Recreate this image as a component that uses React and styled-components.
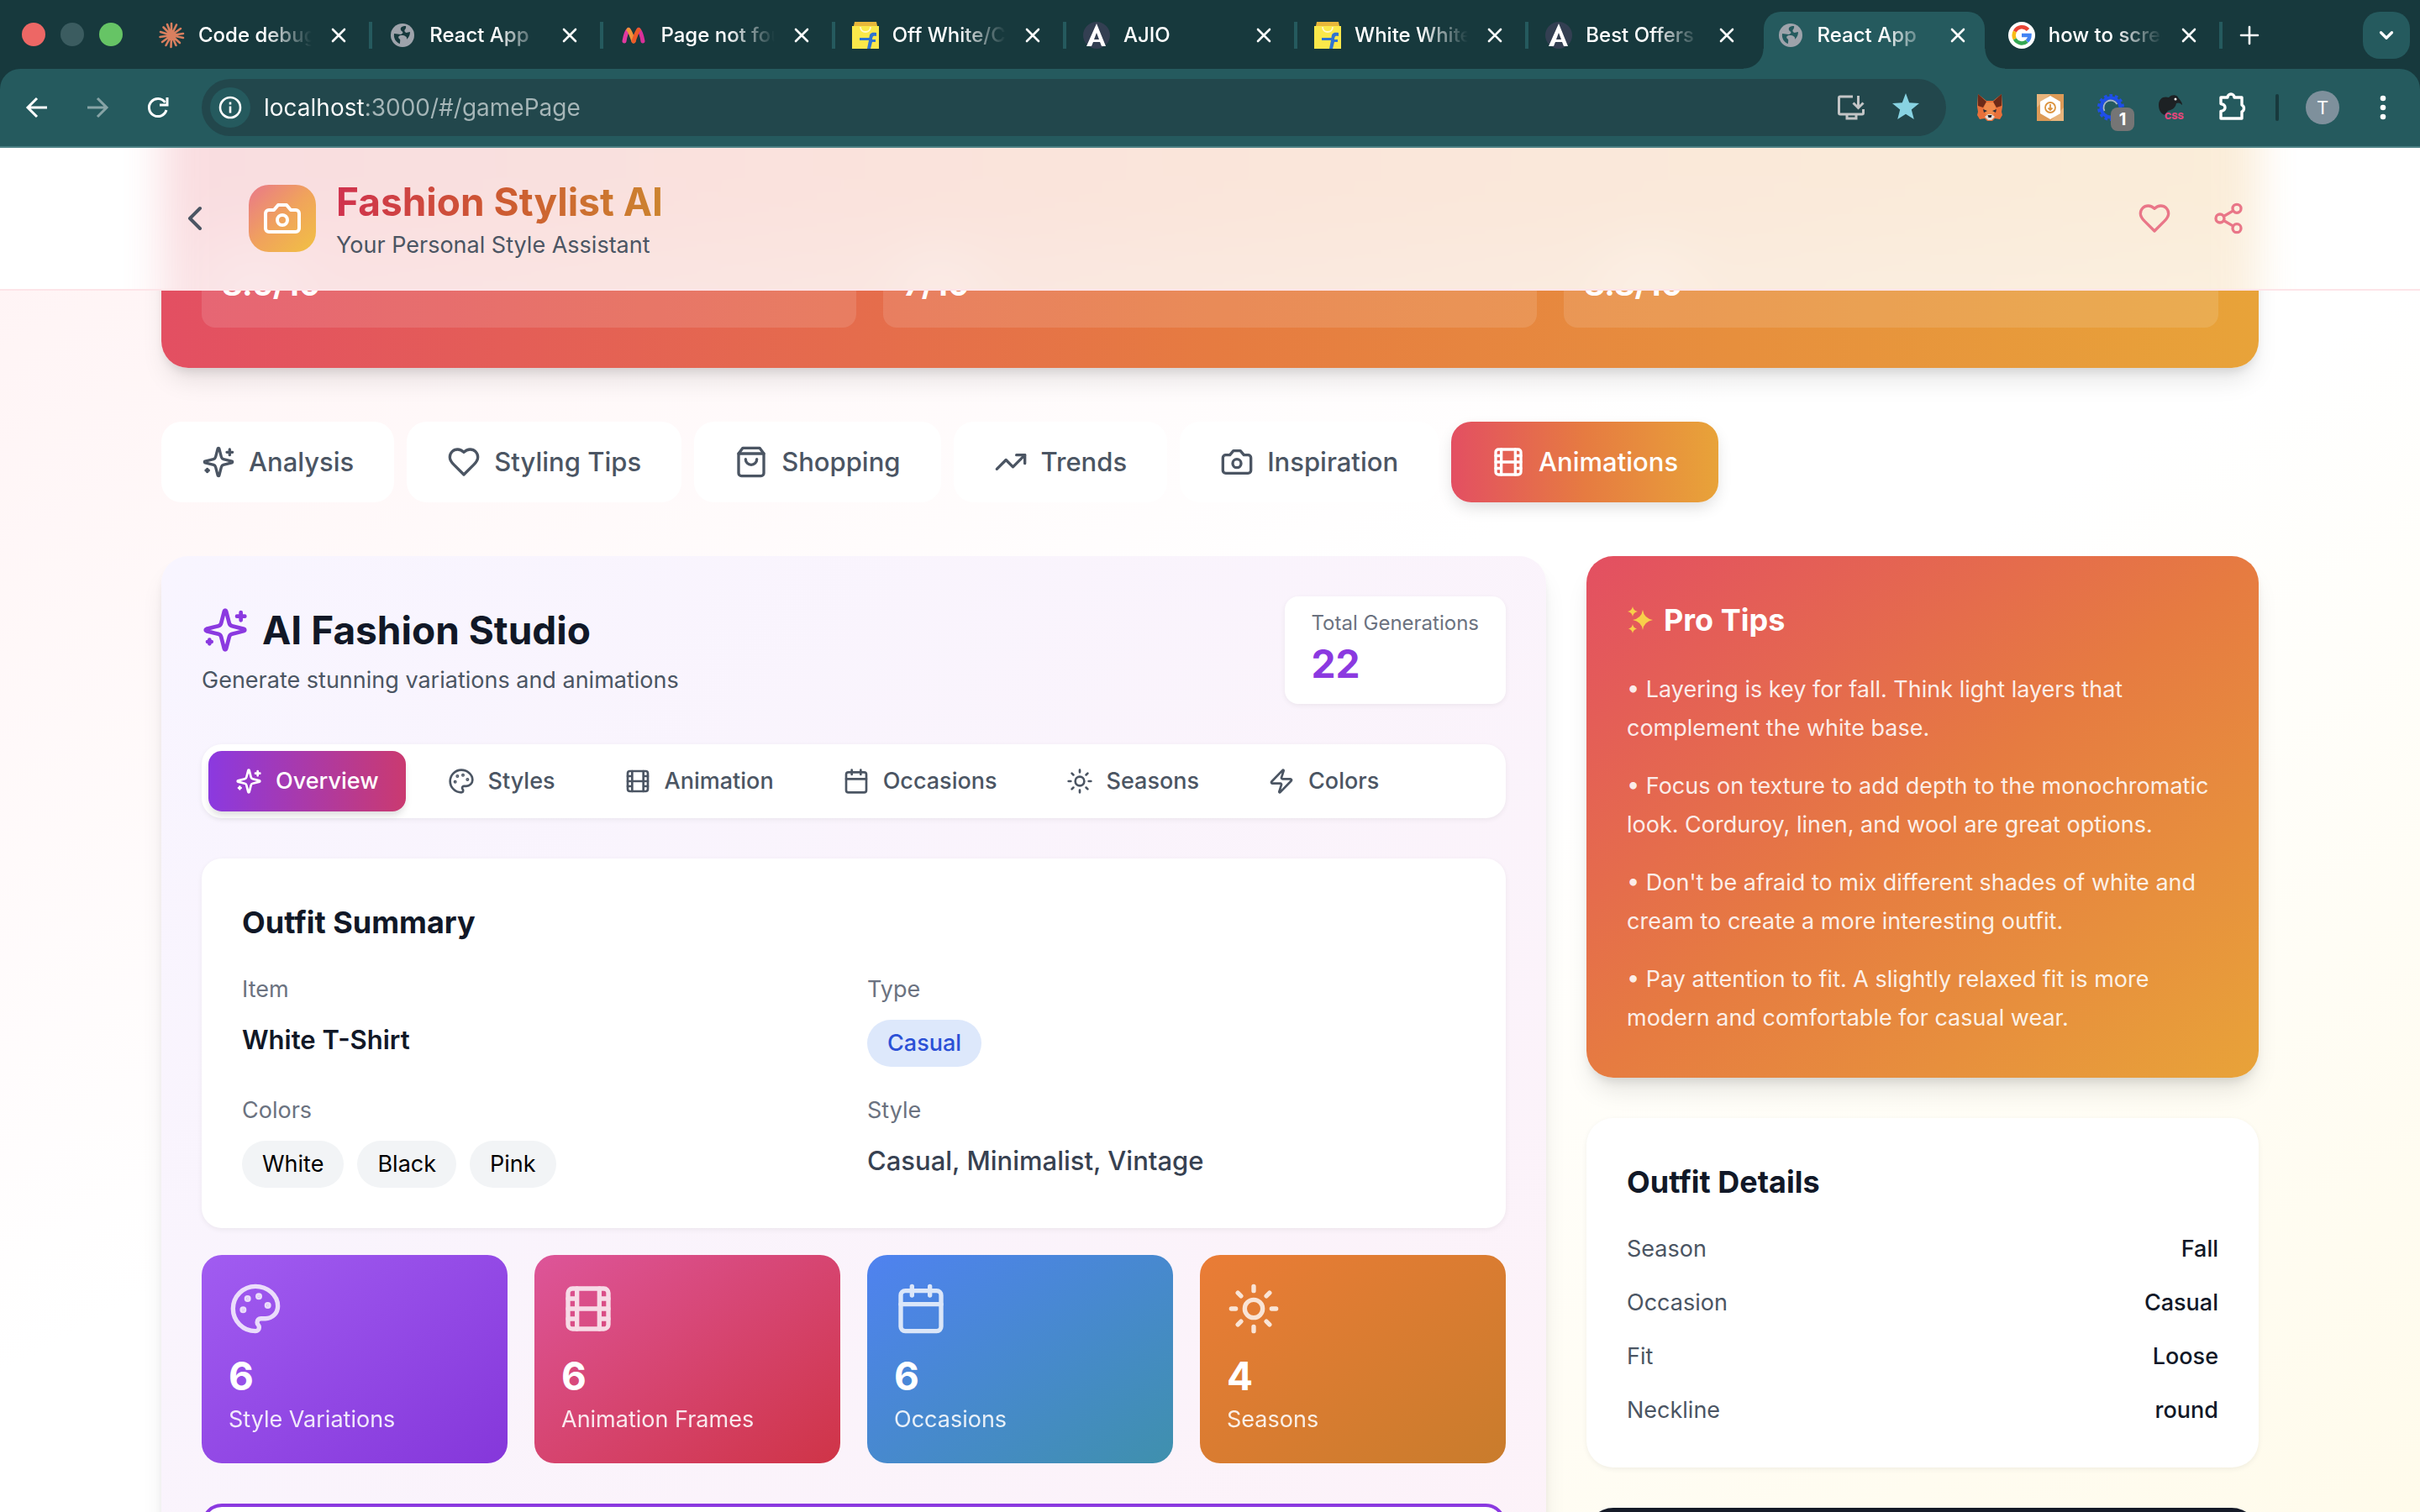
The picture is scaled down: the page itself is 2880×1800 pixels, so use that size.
import React from 'react';
import styled, { createGlobalStyle, css } from 'styled-components';

const FONT = 'Inter, Roboto, "Liberation Sans", sans-serif';

const GlobalStyle = createGlobalStyle`
  *, *::before, *::after { box-sizing: border-box; }
  body { margin: 0; font-family: ${FONT}; color: #000; }
  h1, h2, h3, p, ul, dl, dd { margin: 0; padding: 0; }
  ul { list-style: none; }
  button, input { font: inherit; color: inherit; border: 0; background: none; padding: 0; margin: 0; }
  svg { display: block; flex: none; }
`;

/* ---------- icons ---------- */

const ICONS = {
  sparkles: (
    <>
      <path d="M9.937 15.5A2 2 0 0 0 8.5 14.063l-6.135-1.582a.5.5 0 0 1 0-.962L8.5 9.936A2 2 0 0 0 9.937 8.5l1.582-6.135a.5.5 0 0 1 .963 0L14.063 8.5A2 2 0 0 0 15.5 9.937l6.135 1.581a.5.5 0 0 1 0 .964L15.5 14.063a2 2 0 0 0-1.437 1.437l-1.582 6.135a.5.5 0 0 1-.963 0z" />
      <path d="M20 3v4M22 5h-4M4 17v2M5 18H3" />
    </>
  ),
  heart: <path d="M19 14c1.49-1.46 3-3.21 3-5.5A5.5 5.5 0 0 0 16.5 3c-1.76 0-3 .5-4.5 2-1.5-1.5-2.74-2-4.5-2A5.5 5.5 0 0 0 2 8.5c0 2.3 1.5 4.05 3 5.5l7 7Z" />,
  bag: (
    <>
      <path d="M6 2 3 6v14a2 2 0 0 0 2 2h14a2 2 0 0 0 2-2V6l-3-4Z" />
      <path d="M3 6h18M16 10a4 4 0 0 1-8 0" />
    </>
  ),
  trend: (
    <>
      <path d="M22 7l-8.500 8.500-5-5L2 17" />
      <path d="M16 7h6v6" />
    </>
  ),
  camera: (
    <>
      <path d="M14.5 4h-5L7 7H4a2 2 0 0 0-2 2v9a2 2 0 0 0 2 2h16a2 2 0 0 0 2-2V9a2 2 0 0 0-2-2h-3l-2.5-3z" />
      <circle cx="12" cy="13" r="3" />
    </>
  ),
  film: (
    <>
      <rect width="18" height="18" x="3" y="3" rx="2" />
      <path d="M7 3v18M3 7.5h4M3 12h18M3 16.5h4M17 3v18M17 7.5h4M17 16.5h4" />
    </>
  ),
  palette: (
    <>
      <circle cx="13.5" cy="6.5" r=".5" fill="currentColor" />
      <circle cx="17.5" cy="10.5" r=".5" fill="currentColor" />
      <circle cx="8.5" cy="7.5" r=".5" fill="currentColor" />
      <circle cx="6.5" cy="12.5" r=".5" fill="currentColor" />
      <path d="M12 2C6.5 2 2 6.5 2 12s4.5 10 10 10c.926 0 1.648-.746 1.648-1.688 0-.437-.18-.835-.437-1.125-.29-.289-.438-.652-.438-1.125a1.640 1.640 0 0 1 1.668-1.668h1.996c3.051 0 5.555-2.503 5.555-5.554C21.965 6.012 17.461 2 12 2z" />
    </>
  ),
  calendar: (
    <>
      <path d="M8 2v4M16 2v4M3 10h18" />
      <rect width="18" height="18" x="3" y="4" rx="2" />
    </>
  ),
  sun: (
    <>
      <circle cx="12" cy="12" r="4" />
      <path d="M12 2v2M12 20v2M4.930 4.930l1.410 1.410M17.660 17.660l1.410 1.410M2 12h2M20 12h2M6.340 17.660l-1.410 1.410M19.070 4.930l-1.410 1.410" />
    </>
  ),
  zap: <path d="M4 14a1 1 0 0 1-.78-1.63l9.9-10.2a.5.5 0 0 1 .86.46l-1.92 6.02A1 1 0 0 0 13 10h7a1 1 0 0 1 .78 1.63l-9.9 10.2a.5.5 0 0 1-.86-.46l1.92-6.02A1 1 0 0 0 11 14z" />,
  chevronLeft: <path d="m15 18-6-6 6-6" />,
  chevronDown: <path d="m6 9 6 6 6-6" />,
  share: (
    <>
      <circle cx="18" cy="5" r="3" />
      <circle cx="6" cy="12" r="3" />
      <circle cx="18" cy="19" r="3" />
      <path d="m8.590 13.510 6.830 3.980M15.410 6.510l-6.820 3.980" />
    </>
  ),
  close: <path d="M5 5l14 14M19 5L5 19" />,
  plus: <path d="M12 2v20M2 12h20" />,
};

function Icon({ name, size = 24, stroke = 2 }) {
  return (
    <svg width={size} height={size} viewBox="0 0 24 24" fill="none" stroke="currentColor" strokeWidth={stroke} strokeLinecap="round" strokeLinejoin="round" aria-hidden="true">
      {ICONS[name]}
    </svg>
  );
}

const FAVICONS = {
  burst: (
    <g stroke="#d97f5f" strokeWidth="2.6" strokeLinecap="round">
      <path d="M16 16L16 2M16 16L22 3.500M16 16L27 8M16 16L30 14M16 16L30 19M16 16L26 25M16 16L21.500 28M16 16L15.500 30M16 16L9.500 28M16 16L5 24M16 16L2.500 18M16 16L3 12M16 16L6.500 6.500M16 16L11 3" />
    </g>
  ),
  globe: (
    <>
      <circle cx="16" cy="16" r="14" fill="#9ea3ab" />
      <path d="M18 5c-5 1-5 4-3 6 2 1 2 3-1 4-3 0-5-1-8-1-1 6 3 11 7 12 0-3 1-5-1-6-2-2 0-4 3-4 4 0 7 2 6 5 3-3 4-6 4-9-3 0-4 2-6 0-2-3 2-3 1-7z" fill="var(--tab-bg)" />
    </>
  ),
  myntra: (
    <g fill="none" strokeWidth="5" strokeLinecap="round">
      <path d="M5 23C6 17 8 11 10 9.500" stroke="#e23aa0" />
      <path d="M27 23C26 17 24 11 22 9.500" stroke="#d9309a" />
      <path d="M10 9.500C12 11 14 18 16 23" stroke="#f0933a" />
      <path d="M22 9.500C20 11 18 18 16 23" stroke="#ec5a28" />
    </g>
  ),
  flipkart: (
    <>
      <path d="M3 0h26l1 5H2z" fill="#e9b73a" />
      <path d="M0 5h32v27H0z" fill="#fbe84a" />
      <path d="M10 6c0 8 12 8 12 0" fill="none" stroke="#fff8c8" strokeWidth="1.800" />
      <path d="M29 13c-7-1-8 1-8.500 6H9v3h11l-2 10h4l2-8h4v-3h-4c.4-4 1-5 5-4z" fill="#2f73d0" />
    </>
  ),
  ajio: (
    <>
      <circle cx="16" cy="16" r="16" fill="#333f52" />
      <path d="M16 2l11 27h-5l-2-5h-8l-2 5H4zM16 13l-3 8h6z" fill="#fff" fillRule="evenodd" />
    </>
  ),
  google: (
    <>
      <circle cx="16" cy="16" r="16" fill="#fff" />
      <g fill="none" strokeWidth="4.400">
        <path d="M23.500 9.500A9.500 9.500 0 0 0 7.800 11.500" stroke="#e94435" />
        <path d="M7.800 11.500a9.500 9.500 0 0 0 0 9" stroke="#f8bb15" />
        <path d="M7.800 20.500a9.500 9.500 0 0 0 14.400 2.700" stroke="#34a753" />
        <path d="M22.200 23.200A9.500 9.500 0 0 0 25.500 16H16" stroke="#4384f3" />
      </g>
    </>
  ),
};

function Favicon({ name }) {
  return (
    <svg width="32" height="32" viewBox="0 0 32 32" aria-hidden="true">
      {FAVICONS[name]}
    </svg>
  );
}

/* ---------- browser frame ---------- */

const Window = styled.div`
  display: flex;
  flex-direction: column;
  height: 100vh;
  overflow: hidden;
`;

const TabStrip = styled.header`
  display: flex;
  flex: none;
  height: 82px;
  background: #17393d;
  color: #fff;
`;

const Lights = styled.div`
  display: flex;
  flex: none;
  align-items: center;
  gap: 18px;
  width: 164px;
  padding-left: 26px;
`;

const Light = styled.span`
  width: 28px;
  height: 28px;
  border-radius: 50%;
  background: ${(p) => p.$color};
`;

const Tabs = styled.div`
  display: flex;
  flex: 1;
  min-width: 0;
`;

const Tab = styled.div`
  --tab-bg: ${(p) => (p.$active ? '#255a5e' : '#17393d')};
  position: relative;
  display: flex;
  flex: 1;
  align-items: center;
  gap: 16px;
  min-width: 0;
  padding: 2px 20px 0 24px;
  z-index: ${(p) => (p.$active ? 1 : 0)};

  ${(p) =>
    p.$divider &&
    css`
      background: linear-gradient(#255a5e, #255a5e) 0 26px / 4px 32px no-repeat;
    `}
`;

const ActiveShape = styled.span`
  position: absolute;
  inset: 14px 4px 0 8px;
  z-index: -1;
  border-radius: 20px 20px 0 0;
  background: #255a5e;

  &::before, &::after {
    content: '';
    position: absolute;
    bottom: 0;
    width: 24px;
    height: 24px;
  }
  &::before {
    right: 100%;
    background: radial-gradient(circle at 0 0, transparent 23px, #255a5e 24px);
  }
  &::after {
    left: 100%;
    background: radial-gradient(circle at 100% 0, transparent 23px, #255a5e 24px);
  }
`;

const TabTitle = styled.button`
  flex: 1;
  min-width: 0;
  overflow: hidden;
  white-space: nowrap;
  text-align: left;
  font-size: 24px;
  font-weight: 500;
  line-height: 32px;
  mask-image: linear-gradient(90deg, #000 calc(100% - 56px), transparent);
`;

const TabClose = styled.button`
  display: grid;
  place-items: center;
  width: 32px;
  height: 32px;
`;

const StripEnd = styled.div`
  display: flex;
  flex: none;
  align-items: center;
  justify-content: space-between;
  width: 239px;
  padding: 2px 12px 0 20px;
  background: linear-gradient(#255a5e, #255a5e) 0 26px / 4px 32px no-repeat;
`;

const TabSearch = styled.button`
  display: grid;
  place-items: center;
  width: 56px;
  height: 56px;
  border-radius: 20px;
  background: #255a5e;
`;

const ToolbarBack = styled.div`
  flex: none;
  background: #17393d;
`;

const Toolbar = styled.nav`
  display: flex;
  align-items: center;
  gap: 32px;
  height: 94px;
  padding: 0 24px;
  border-bottom: 2px solid #4b7f83;
  border-radius: 24px 24px 0 0;
  background: #255a5e;
  color: #fff;
`;

const ToolButton = styled.button`
  position: relative;
  display: grid;
  place-items: center;
  flex: none;
  width: 40px;
  height: 40px;
  opacity: ${(p) => (p.$dim ? 0.45 : 1)};
`;

const AddressBar = styled.div`
  display: flex;
  flex: 1;
  align-items: center;
  gap: 16px;
  height: 68px;
  padding: 0 32px 0 10px;
  border-radius: 34px;
  background: #22474c;
`;

const SiteInfo = styled.button`
  display: grid;
  place-items: center;
  width: 48px;
  height: 48px;
  border-radius: 50%;
  background: #255a5e;
`;

const AddressInput = styled.input`
  flex: 1;
  min-width: 0;
  height: 40px;
  font-size: 28px;
  color: transparent;
  background: linear-gradient(90deg, #fff 121px, #a6b6b8 121px);
  background-clip: text;
  -webkit-background-clip: text;
`;

const AddressIcons = styled.div`
  display: flex;
  gap: 32px;
`;

const CountBadge = styled.span`
  position: absolute;
  left: 20px;
  top: 20px;
  width: 28px;
  height: 28px;
  border-radius: 8px;
  background: #757575;
  font-size: 20px;
  font-weight: 700;
  line-height: 28px;
  text-align: center;
`;

const ToolDivider = styled.span`
  width: 4px;
  height: 32px;
  border-radius: 2px;
  background: #17393d;
`;

const Avatar = styled.button`
  width: 40px;
  height: 40px;
  border-radius: 50%;
  background: #7e909c;
  font-size: 22px;
  line-height: 40px;
`;

/* ---------- page ---------- */

const SUNSET = '#e34f62, #e67b41, #e8a339';

const Viewport = styled.main`
  display: flex;
  flex: 1;
  flex-direction: column;
  min-height: 0;
  background: linear-gradient(to bottom right, #fff3f4, #fff 45%, #fff 55%, #fffbeb);
`;

const AppHeader = styled.header`
  position: relative;
  flex: none;
  overflow: hidden;
  border-bottom: 2px solid #fde4e8;
  background: #fff;
`;

const HeaderTint = styled.div`
  position: absolute;
  inset: -60px 0;
  opacity: 0.19;
  filter: blur(24px);
`;

const Container = styled.div`
  max-width: 2560px;
  margin: 0 auto;
  padding: 0 32px;
`;

const TintFill = styled.div`
  height: 288px;
  background:
    radial-gradient(circle at 112px 225px, rgba(255, 255, 255, 0.22), transparent 90px),
    radial-gradient(circle at 37% 225px, rgba(255, 255, 255, 0.22), transparent 80px),
    radial-gradient(circle at calc(67% + 96px) 225px, rgba(255, 255, 255, 0.22), transparent 90px),
    linear-gradient(transparent 40%, rgba(255, 255, 255, 0.15) 80%),
    linear-gradient(to right, ${SUNSET});
`;

const HeaderRow = styled(Container)`
  position: relative;
  display: flex;
  align-items: center;
  padding-top: 32px;
  padding-bottom: 32px;
`;

const IconButton = styled.button`
  display: grid;
  place-items: center;
  padding: 16px;
  color: ${(p) => p.$color};
`;

const Logo = styled.div`
  display: grid;
  place-items: center;
  width: 80px;
  height: 80px;
  margin: 0 24px;
  border-radius: 24px;
  background: linear-gradient(to bottom right, #e9788a, #f0a35c, #f1c143);
  color: #fff;
`;

const HeaderText = styled.div`
  display: flex;
  flex-direction: column;
  align-items: flex-start;
`;

const AppTitle = styled.h1`
  font-size: 46px;
  font-weight: 700;
  line-height: 64px;
  color: transparent;
  background: linear-gradient(90deg, #d0324e, #cd5a31, #cc842f);
  background-clip: text;
  -webkit-background-clip: text;
`;

const Muted = styled.p`
  font-size: 27px;
  line-height: 40px;
  color: #4b5563;
`;

const HeaderActions = styled.div`
  display: flex;
  gap: 16px;
  margin-left: auto;
`;

const Scroller = styled.div`
  flex: 1;
  min-height: 0;
  overflow: hidden;
`;

const Scrolled = styled(Container)`
  margin-top: -170px;
`;

const Banner = styled.section`
  display: grid;
  grid-template-columns: repeat(3, 1fr);
  gap: 32px;
  padding: 70px 48px 48px;
  border-radius: 32px;
  background: linear-gradient(to right, ${SUNSET});
  box-shadow: 0 20px 30px -6px rgba(0, 0, 0, 0.1), 0 8px 12px -4px rgba(0, 0, 0, 0.1);
`;

const Score = styled.div`
  padding: 64px 24px 24px;
  border-radius: 16px;
  background: rgba(255, 255, 255, 0.12);
  color: #fff;
  font-size: 38px;
  font-weight: 700;
  line-height: 56px;
`;

const PageNav = styled.nav`
  display: flex;
  gap: 15px;
  margin-top: 64px;
`;

const PageNavButton = styled.button`
  display: flex;
  align-items: center;
  gap: 16px;
  padding: 24px 48px;
  border-radius: 24px;
  font-size: 31px;
  font-weight: 500;
  line-height: 48px;
  white-space: nowrap;
  background: ${(p) => (p.$active ? `linear-gradient(to right, ${SUNSET})` : '#fff')};
  color: ${(p) => (p.$active ? '#fff' : '#4b5563')};
  box-shadow: ${(p) => (p.$active ? '0 8px 20px -4px rgba(0, 0, 0, 0.16)' : 'none')};
`;

const Columns = styled.div`
  display: grid;
  grid-template-columns: repeat(3, 1fr);
  align-items: start;
  gap: 48px;
  margin-top: 64px;
`;

const Studio = styled.section`
  display: flex;
  flex-direction: column;
  grid-column: span 2;
  gap: 48px;
  padding: 48px;
  border-radius: 32px;
  background: linear-gradient(to bottom right, #f8f5ff, #fdf2f8);
  box-shadow: 0 20px 30px -6px rgba(0, 0, 0, 0.1), 0 8px 12px -4px rgba(0, 0, 0, 0.1);
`;

const StudioHead = styled.div`
  display: flex;
  align-items: center;
  justify-content: space-between;
`;

const StudioTitle = styled.h2`
  display: flex;
  align-items: center;
  gap: 16px;
  margin-bottom: 8px;
  color: #111827;
  font-size: 46px;
  font-weight: 700;
  line-height: 64px;

  svg { color: #8b39e0; }
`;

const softShadow = css`
  box-shadow: 0 2px 6px rgba(0, 0, 0, 0.06);
`;

const Total = styled.div`
  padding: 16px 32px;
  border-radius: 16px;
  background: #fff;
  ${softShadow}
`;

const TotalLabel = styled.p`
  color: #6b7280;
  font-size: 24px;
  line-height: 32px;
`;

const TotalValue = styled.p`
  color: #8b39e0;
  font-size: 46px;
  font-weight: 700;
  line-height: 64px;
`;

const StudioTabs = styled.div`
  display: flex;
  gap: 18px;
  padding: 8px;
  border-radius: 24px;
  background: #fff;
  ${softShadow}
`;

const StudioTab = styled.button`
  display: flex;
  align-items: center;
  gap: 16px;
  padding: 16px 32px;
  border-radius: 16px;
  font-size: 27px;
  font-weight: 500;
  line-height: 40px;
  color: ${(p) => (p.$active ? '#fff' : '#4b5563')};
  background: ${(p) => (p.$active ? 'linear-gradient(to right, #8b39e0, #ca3a70)' : 'none')};
  box-shadow: ${(p) => (p.$active ? '0 6px 10px -2px rgba(0, 0, 0, 0.15)' : 'none')};
`;

const Card = styled.section`
  padding: 48px;
  border-radius: ${(p) => p.$radius}px;
  background: #fff;
  ${softShadow}
`;

const CardTitle = styled.h3`
  display: flex;
  align-items: center;
  gap: 12px;
  margin-bottom: 32px;
  color: ${(p) => p.$color || '#111827'};
  font-size: 36px;
  font-weight: 700;
  line-height: 56px;
`;

const SummaryGrid = styled.dl`
  display: grid;
  grid-template-columns: repeat(2, 1fr);
  gap: 32px;
`;

const Term = styled.dt`
  margin-bottom: 16px;
  color: #6b7280;
  font-size: 27px;
  line-height: 40px;
`;

const Value = styled.dd`
  display: flex;
  gap: 16px;
  color: ${(p) => p.$color};
  font-size: 31px;
  font-weight: ${(p) => p.$weight};
  line-height: 48px;
`;

const Pill = styled.span`
  padding: 8px 24px;
  border-radius: 28px;
  background: ${(p) => (p.$accent ? '#dde8fb' : '#f2f4f6')};
  color: ${(p) => (p.$accent ? '#2b50d6' : '#000')};
  font-size: 27px;
  font-weight: ${(p) => (p.$accent ? 500 : 400)};
  line-height: 40px;
`;

const Overview = styled.div`
  display: flex;
  flex-direction: column;
  gap: 32px;
`;

const StatGrid = styled.div`
  display: grid;
  grid-template-columns: repeat(4, 1fr);
  gap: 32px;
`;

const Stat = styled.div`
  padding: 32px;
  border-radius: 24px;
  background: linear-gradient(to bottom right, ${(p) => p.$from}, ${(p) => p.$to});
  color: #fff;

  svg { opacity: 0.8; margin-bottom: 16px; }
`;

const StatValue = styled.p`
  font-size: 46px;
  font-weight: 700;
  line-height: 64px;
`;

const StatLabel = styled.p`
  font-size: 27px;
  line-height: 40px;
  opacity: 0.88;
`;

const Outlined = styled.section`
  height: 320px;
  border: 4px solid #8b39e0;
  border-radius: 24px;
  background: #fff;
`;

const Side = styled.aside`
  display: flex;
  flex-direction: column;
  gap: 48px;
`;

const Tips = styled.section`
  padding: 48px;
  border-radius: 32px;
  background: linear-gradient(to bottom right, ${SUNSET});
  box-shadow: 0 20px 30px -6px rgba(0, 0, 0, 0.1), 0 8px 12px -4px rgba(0, 0, 0, 0.1);
`;

const TipList = styled.ul`
  display: flex;
  flex-direction: column;
  gap: 23px;
  color: rgba(255, 255, 255, 0.9);
  font-size: 27px;
  line-height: 46px;
`;

const Details = styled.dl`
  display: flex;
  flex-direction: column;
  gap: 24px;
`;

const DetailRow = styled.div`
  display: flex;
  justify-content: space-between;
  color: #4b5563;
  font-size: 27px;
  line-height: 40px;

  dd { color: #111827; font-weight: 500; }
`;

const DarkCard = styled.section`
  height: 320px;
  border-radius: 32px;
  background: #151a27;
`;

/* ---------- data ---------- */

const browserTabs = [
  { icon: 'burst', title: 'Code debugging' },
  { icon: 'globe', title: 'React App', divider: true },
  { icon: 'myntra', title: 'Page not found', divider: true },
  { icon: 'flipkart', title: 'Off White/Cream', divider: true },
  { icon: 'ajio', title: 'AJIO', divider: true },
  { icon: 'flipkart', title: 'White White', divider: true },
  { icon: 'ajio', title: 'Best Offers', divider: true },
  { icon: 'globe', title: 'React App', active: true },
  { icon: 'google', title: 'how to screen' },
];

const pageNav = [
  ['sparkles', 'Analysis'],
  ['heart', 'Styling Tips'],
  ['bag', 'Shopping'],
  ['trend', 'Trends'],
  ['camera', 'Inspiration'],
  ['film', 'Animations'],
];

const studioTabs = [
  ['sparkles', 'Overview'],
  ['palette', 'Styles'],
  ['film', 'Animation'],
  ['calendar', 'Occasions'],
  ['sun', 'Seasons'],
  ['zap', 'Colors'],
];

const stats = [
  ['palette', '6', 'Style Variations', '#a15cf1', '#8537da'],
  ['film', '6', 'Animation Frames', '#dd5599', '#cf3447'],
  ['calendar', '6', 'Occasions', '#4f82f0', '#3f90ad'],
  ['sun', '4', 'Seasons', '#ea7c36', '#c97c2c'],
];

const tips = [
  'Layering is key for fall. Think light layers that complement the white base.',
  'Focus on texture to add depth to the monochromatic look. Corduroy, linen, and wool are great options.',
  "Don't be afraid to mix different shades of white and cream to create a more interesting outfit.",
  'Pay attention to fit. A slightly relaxed fit is more modern and comfortable for casual wear.',
];

const details = [
  ['Season', 'Fall'],
  ['Occasion', 'Casual'],
  ['Fit', 'Loose'],
  ['Neckline', 'round'],
];

/* ---------- toolbar drawings ---------- */

const Arrow = ({ flip }) => (
  <svg width="32" height="32" viewBox="0 0 32 32" fill="none" stroke="currentColor" strokeWidth="3">
    <path d={flip ? 'M4 16h22M16 5l11 11-11 11' : 'M28 16H6M16 5L5 16l11 11'} />
  </svg>
);

const Reload = () => (
  <svg width="32" height="32" viewBox="0 0 32 32" fill="none" stroke="currentColor" strokeWidth="3">
    <path d="M26 19a10.500 10.500 0 1 1-1.500-9" />
    <path d="M27 4v9h-9" />
  </svg>
);

const Info = () => (
  <svg width="28" height="28" viewBox="0 0 28 28" fill="none" stroke="#fff" strokeWidth="2.600">
    <circle cx="14" cy="14" r="12" />
    <path d="M14 12.500v8M14 7.500v3" />
  </svg>
);

const Install = () => (
  <svg width="34" height="34" viewBox="0 0 34 34" fill="none" stroke="#c3c5c6" strokeWidth="3">
    <path d="M19 4H4q-1.500 0-1.500 1.500v18Q2.500 25 4 25h26q1.500 0 1.500-1.500V19M12 25v5h11v-5" />
    <path d="M25.500 3v14M19.500 11.500l6 6 6-6" />
  </svg>
);

const Star = () => (
  <svg width="32" height="32" viewBox="0 0 32 32" fill="#88d3e2">
    <path d="M16 0l4.200 11.200L32 12l-9.200 7.600 3 11.400-9.800-6.300L6.200 31l3-11.400L0 12l11.800-.8z" />
  </svg>
);

const Fox = () => (
  <svg width="32" height="32" viewBox="0 0 32 32">
    <path d="M2 0l10 8h8l10-8 1 15-1 6 1 4-3 5-6-1-3 3h-6l-3-3-6 1-3-5 1-4-1-6z" fill="#e8703a" />
    <path d="M2 0l10 9-4 7-6-2zM30 0L20 9l4 7 6-2z" fill="#6d2a18" />
    <path d="M9 16l3-6h8l3 6-3 11h-8z" fill="#f08a4b" />
    <path d="M8 18l5 2-4 2zM24 18l-5 2 4 2z" fill="#2a2f3a" />
    <path d="M10 27l4-3h4l4 3-4 4h-4z" fill="#e6dcd6" />
    <path d="M13.500 25h5l-1 3h-3z" fill="#1e2026" />
  </svg>
);

const HexTile = () => (
  <svg width="32" height="32" viewBox="0 0 32 32">
    <rect width="32" height="32" fill="#dd9a57" />
    <path d="M0 0h16L0 16zM32 32H16l16-16z" fill="#e8b47c" />
    <path d="M16 2l12 7v14l-12 7-12-7V9z" fill="#fff" />
    <g fill="none" stroke="#dc9440" strokeWidth="1.800">
      <circle cx="16" cy="16" r="6" />
      <path d="M16 12v7M13.500 16.500L16 19l2.500-2.500" />
    </g>
  </svg>
);

const Gear = () => (
  <svg width="32" height="32" viewBox="0 0 32 32" fill="none">
    <circle cx="16" cy="16" r="14" stroke="#1f4fe8" strokeWidth="4" strokeDasharray="3.600 2.800" />
    <circle cx="16" cy="16" r="11.500" stroke="#1f4fe8" strokeWidth="4" />
    <path d="M8.500 20a8.500 8.500 0 0 1 15-8" stroke="#a9b6c9" strokeWidth="1.800" />
  </svg>
);

const Bird = () => (
  <svg width="36" height="34" viewBox="0 0 36 34">
    <path d="M3 14C3 6 9 3 15 5c4-4 10-3 11 0 2 3 5 5 5 9-3-3-5-3-7-2-1 6-6 8-10 9l-4 5c-5-2-7-7-7-12z" fill="#1d2124" />
    <circle cx="23" cy="7" r="1.500" fill="#fff" />
    <text x="10" y="31" fill="#e8467c" fontFamily="Inter, sans-serif" fontSize="11" fontWeight="800">CSS</text>
  </svg>
);

const Puzzle = () => (
  <svg width="40" height="40" viewBox="0 0 40 40" fill="none" stroke="#fff" strokeWidth="3.400" strokeLinejoin="round">
    <path d="M7 8h8a4 4 0 0 1 8 0h9v9a4.500 4.500 0 0 1 0 8v8H7v-8.500q5-1 5-4.500t-5-4.500z" />
  </svg>
);

const Dots = () => (
  <svg width="8" height="32" viewBox="0 0 8 32" fill="#fff">
    <circle cx="4" cy="5" r="3.300" />
    <circle cx="4" cy="16" r="3.300" />
    <circle cx="4" cy="27" r="3.300" />
  </svg>
);

const GoldSparkles = () => (
  <svg width="32" height="36" viewBox="0 0 32 36">
    <path d="M19 6q1.500 10 12 12-10.500 2-12 12-1.500-10-12-12 10.500-2 12-12z" fill="#f8cf4a" />
    <path d="M7 2q.8 5 6 6-5.200 1-6 6-.8-5-6-6 5.200-1 6-6z" fill="#f8cf4a" />
    <path d="M7 23q.7 4.500 5 5.500-4.300 1-5 5.500-.7-4.500-5-5.500 4.300-1 5-5.500z" fill="#f8cf4a" />
  </svg>
);

/* ---------- app ---------- */

function BrowserFrame() {
  return (
    <>
      <TabStrip>
        <Lights>
          <Light $color="#ed6765" />
          <Light $color="#3b5c60" />
          <Light $color="#66c465" />
        </Lights>
        <Tabs>
          {browserTabs.map((t, i) => (
            <Tab key={i} $active={t.active} $divider={t.divider}>
              {t.active && <ActiveShape />}
              <Favicon name={t.icon} />
              <TabTitle>{t.title}</TabTitle>
              <TabClose aria-label="Close tab"><Icon name="close" size={24} stroke={2.6} /></TabClose>
            </Tab>
          ))}
        </Tabs>
        <StripEnd>
          <TabClose aria-label="New tab"><Icon name="plus" size={24} stroke={2.6} /></TabClose>
          <TabSearch aria-label="Search tabs"><Icon name="chevronDown" size={26} stroke={3} /></TabSearch>
        </StripEnd>
      </TabStrip>
      <ToolbarBack>
        <Toolbar>
          <ToolButton aria-label="Back"><Arrow /></ToolButton>
          <ToolButton aria-label="Forward" $dim><Arrow flip /></ToolButton>
          <ToolButton aria-label="Reload"><Reload /></ToolButton>
          <AddressBar>
            <SiteInfo aria-label="Site information"><Info /></SiteInfo>
            <AddressInput aria-label="Address" defaultValue="localhost:3000/#/gamePage" />
            <AddressIcons>
              <Install />
              <Star />
            </AddressIcons>
          </AddressBar>
          <ToolButton aria-label="Wallet"><Fox /></ToolButton>
          <ToolButton aria-label="Downloader"><HexTile /></ToolButton>
          <ToolButton aria-label="Tools"><Gear /><CountBadge>1</CountBadge></ToolButton>
          <ToolButton aria-label="Style viewer"><Bird /></ToolButton>
          <ToolButton aria-label="Extensions"><Puzzle /></ToolButton>
          <ToolDivider />
          <Avatar>T</Avatar>
          <ToolButton aria-label="Menu"><Dots /></ToolButton>
        </Toolbar>
      </ToolbarBack>
    </>
  );
}

export default function App() {
  return (
    <Window>
      <GlobalStyle />
      <BrowserFrame />
      <Viewport>
        <AppHeader>
          <HeaderTint>
            <Container><TintFill /></Container>
          </HeaderTint>
          <HeaderRow>
            <IconButton $color="#4b5563" aria-label="Go back"><Icon name="chevronLeft" size={48} /></IconButton>
            <Logo><Icon name="camera" size={48} /></Logo>
            <HeaderText>
              <AppTitle>Fashion Stylist AI</AppTitle>
              <Muted>Your Personal Style Assistant</Muted>
            </HeaderText>
            <HeaderActions>
              <IconButton $color="#e97688" aria-label="Save"><Icon name="heart" size={40} /></IconButton>
              <IconButton $color="#e97688" aria-label="Share"><Icon name="share" size={40} /></IconButton>
            </HeaderActions>
          </HeaderRow>
        </AppHeader>

        <Scroller>
          <Scrolled>
            <Banner>
              <Score>8.5/10</Score>
              <Score>7/10</Score>
              <Score>8.8/10</Score>
            </Banner>

            <PageNav>
              {pageNav.map(([icon, label]) => (
                <PageNavButton key={label} $active={label === 'Animations'}>
                  <Icon name={icon} size={40} />
                  {label}
                </PageNavButton>
              ))}
            </PageNav>

            <Columns>
              <Studio>
                <StudioHead>
                  <div>
                    <StudioTitle><Icon name="sparkles" size={56} />AI Fashion Studio</StudioTitle>
                    <Muted>Generate stunning variations and animations</Muted>
                  </div>
                  <Total>
                    <TotalLabel>Total Generations</TotalLabel>
                    <TotalValue>22</TotalValue>
                  </Total>
                </StudioHead>

                <StudioTabs>
                  {studioTabs.map(([icon, label]) => (
                    <StudioTab key={label} $active={label === 'Overview'}>
                      <Icon name={icon} size={32} />
                      {label}
                    </StudioTab>
                  ))}
                </StudioTabs>

                <Overview>
                  <Card $radius={24}>
                    <CardTitle>Outfit Summary</CardTitle>
                    <SummaryGrid>
                      <div>
                        <Term>Item</Term>
                        <Value $color="#111827" $weight={600}>White T-Shirt</Value>
                      </div>
                      <div>
                        <Term>Type</Term>
                        <Value><Pill $accent>Casual</Pill></Value>
                      </div>
                      <div>
                        <Term>Colors</Term>
                        <Value>
                          <Pill>White</Pill>
                          <Pill>Black</Pill>
                          <Pill>Pink</Pill>
                        </Value>
                      </div>
                      <div>
                        <Term>Style</Term>
                        <Value $color="#374151" $weight={500}>Casual, Minimalist, Vintage</Value>
                      </div>
                    </SummaryGrid>
                  </Card>

                  <StatGrid>
                    {stats.map(([icon, value, label, from, to]) => (
                      <Stat key={label} $from={from} $to={to}>
                        <Icon name={icon} size={64} />
                        <StatValue>{value}</StatValue>
                        <StatLabel>{label}</StatLabel>
                      </Stat>
                    ))}
                  </StatGrid>
                </Overview>

                <Outlined />
              </Studio>

              <Side>
                <Tips>
                  <CardTitle $color="#fff"><GoldSparkles />Pro Tips</CardTitle>
                  <TipList>
                    {tips.map((tip) => (
                      <li key={tip}>{`• ${tip}`}</li>
                    ))}
                  </TipList>
                </Tips>

                <Card $radius={32}>
                  <CardTitle>Outfit Details</CardTitle>
                  <Details>
                    {details.map(([name, value]) => (
                      <DetailRow key={name}>
                        <dt>{name}</dt>
                        <dd>{value}</dd>
                      </DetailRow>
                    ))}
                  </Details>
                </Card>

                <DarkCard />
              </Side>
            </Columns>
          </Scrolled>
        </Scroller>
      </Viewport>
    </Window>
  );
}
